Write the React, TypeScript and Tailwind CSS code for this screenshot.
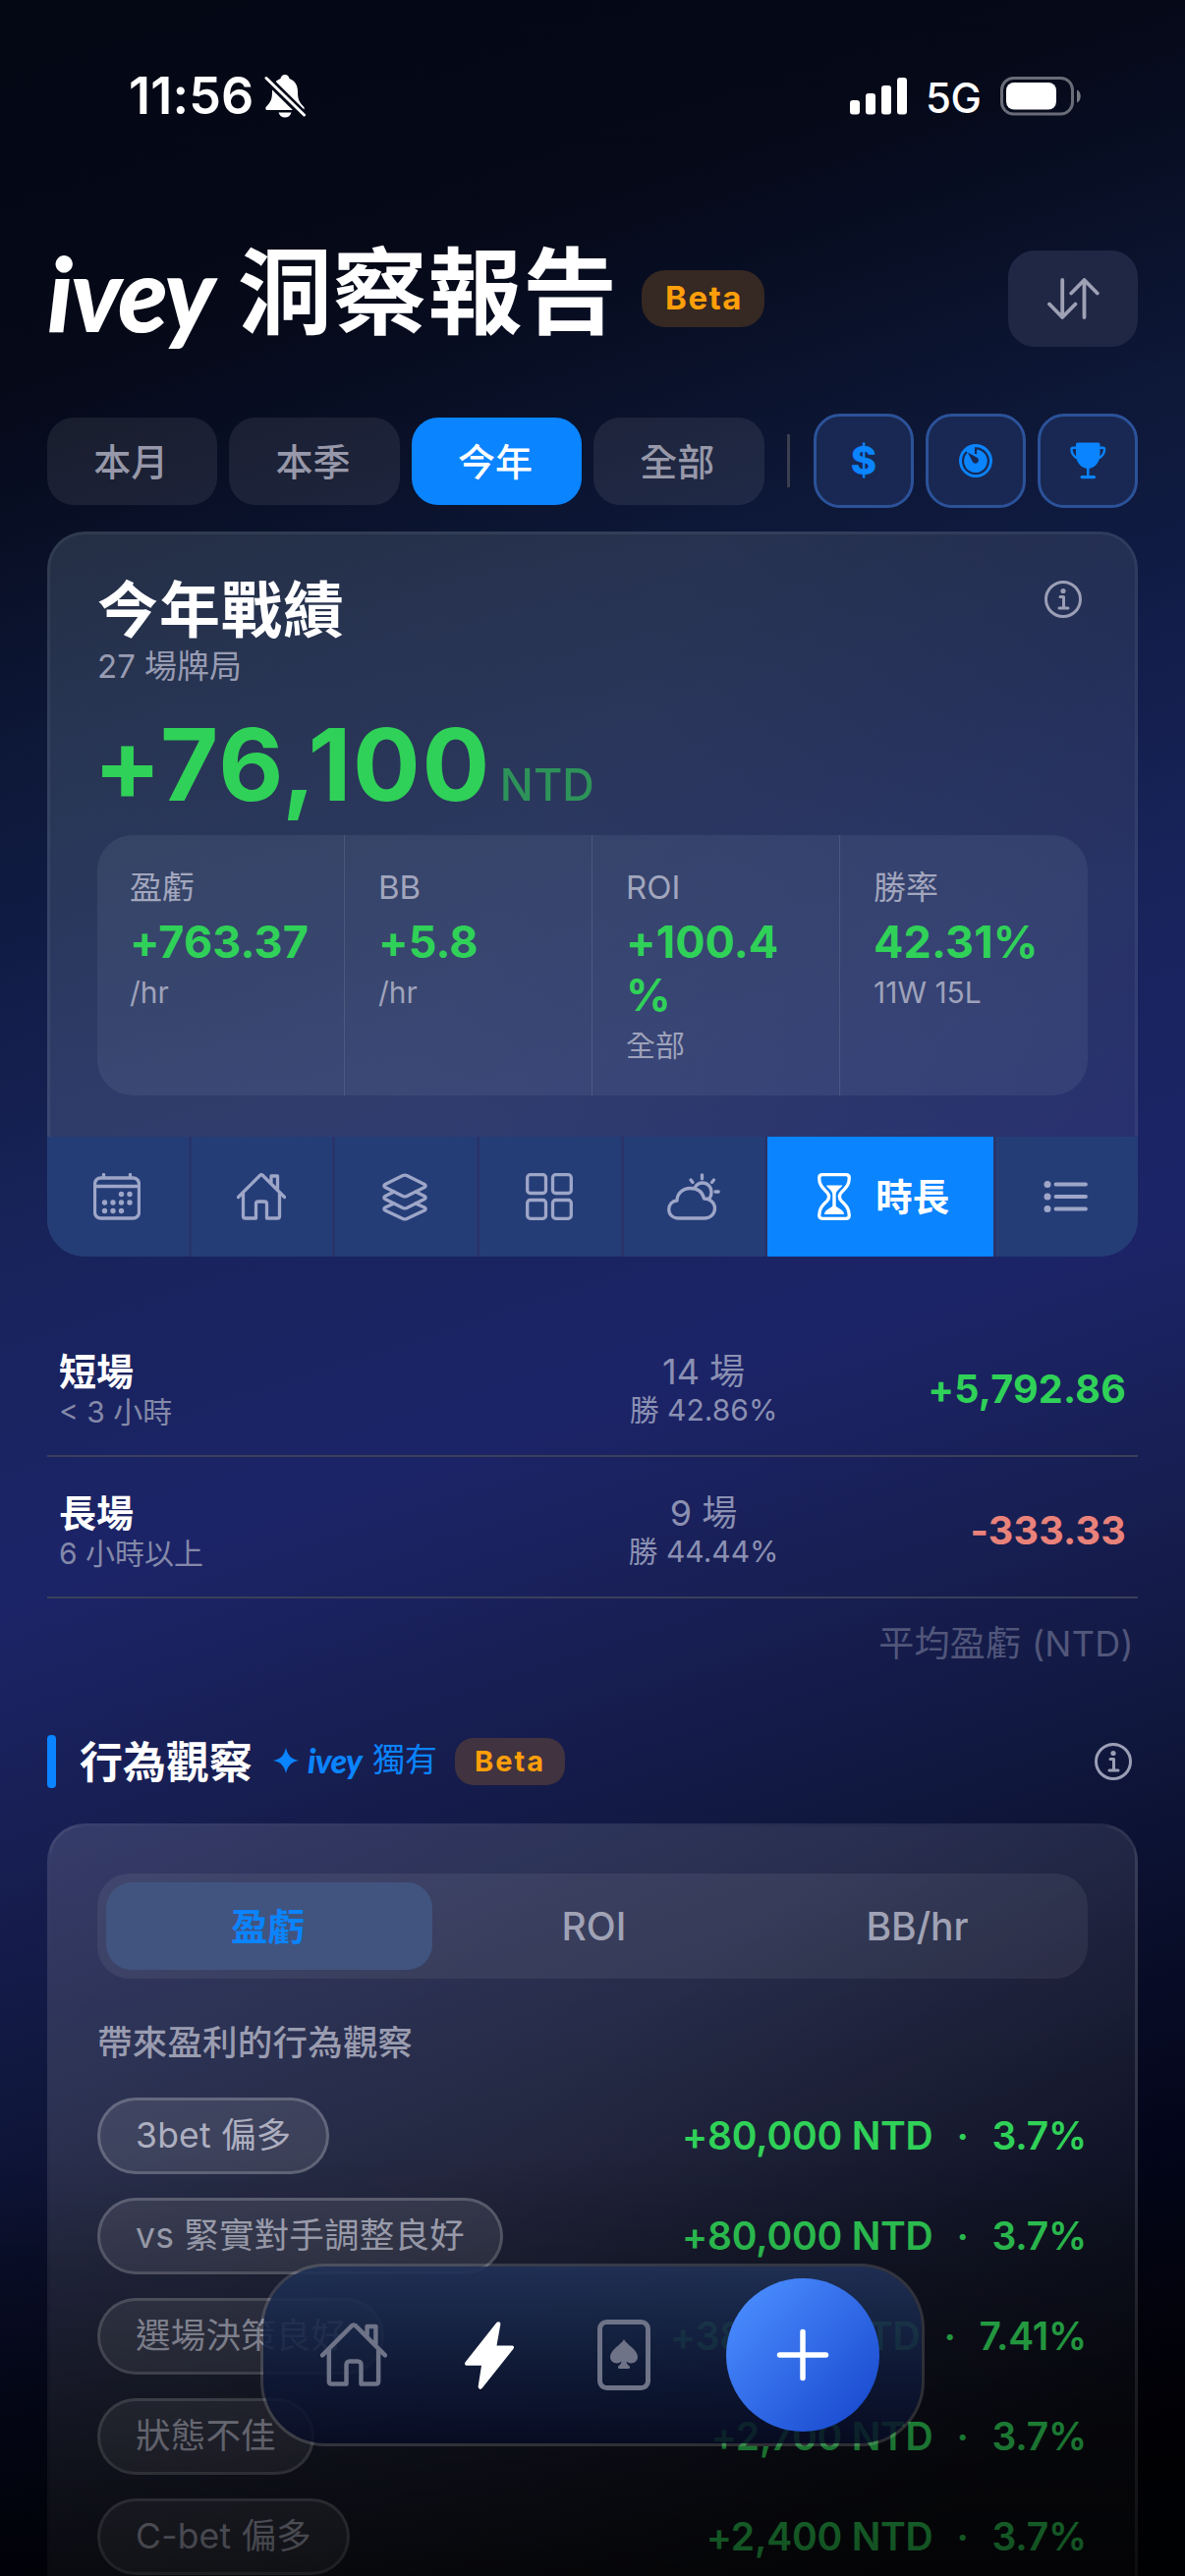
import React from 'react';

interface Stat {
  label: string;
  value: string;
  note: string;
}

interface Behavior {
  name: string;
  amount: string;
  rate: string;
}

const stats: Stat[] = [
  { label: '盈虧', value: '+763.37', note: '/hr' },
  { label: 'BB', value: '+5.8', note: '/hr' },
  { label: 'ROI', value: '+100.4\n%', note: '全部' },
  { label: '勝率', value: '42.31%', note: '11W 15L' },
];

const sessions = [
  { name: '短場', range: '< 3 小時', count: '14 場', win: '勝 42.86%', value: '+5,792.86', positive: true },
  { name: '長場', range: '6 小時以上', count: '9 場', win: '勝 44.44%', value: '-333.33', positive: false },
];

const behaviors: Behavior[] = [
  { name: '3bet 偏多', amount: '+80,000 NTD', rate: '3.7%' },
  { name: 'vs 緊實對手調整良好', amount: '+80,000 NTD', rate: '3.7%' },
  { name: '選場決策良好', amount: '+38,000 NTD', rate: '7.41%' },
  { name: '狀態不佳', amount: '+2,700 NTD', rate: '3.7%' },
  { name: 'C-bet 偏多', amount: '+2,400 NTD', rate: '3.7%' },
];

const line = {
  fill: 'none',
  stroke: 'currentColor',
  strokeWidth: 3.3,
  strokeLinecap: 'round' as const,
  strokeLinejoin: 'round' as const,
};

function BellOffIcon() {
  return (
    <svg width="42" height="44" viewBox="0 0 42 44">
      <mask id="bell-cut">
        <rect width="42" height="44" fill="#fff" />
        <path d="M1 2.5 40 41" stroke="#000" strokeWidth="8.5" />
      </mask>
      <g mask="url(#bell-cut)" fill="#fff">
        <path d="M21 0c-2.6 0-4.2 1.7-4.5 4C10.800 6 8 11 8 17c0 8-1.500 11-5.500 15C.5 34 1 36 3.500 36h35c2.500 0 3-2 1-4-4-4-5.500-7-5.500-15 0-6-2.800-11-8.500-13-.3-2.300-1.900-4-4.500-4z" />
        <path d="M14.500 38.500h13c-.8 3-3.200 5-6.500 5s-5.700-2-6.500-5z" />
      </g>
      <path d="M2 3.500 40.500 41" stroke="#fff" strokeWidth="3" strokeLinecap="round" />
    </svg>
  );
}

function SignalIcon() {
  return (
    <svg width="58" height="38" viewBox="0 0 58 38" fill="#fff">
      <rect x="0" y="23" width="10" height="14.500" rx="3" />
      <rect x="16" y="16" width="10" height="21.500" rx="3" />
      <rect x="32" y="8" width="10" height="29.500" rx="3" />
      <rect x="48" y="0" width="10" height="37.500" rx="3" />
    </svg>
  );
}

function BatteryIcon() {
  return (
    <svg width="83" height="40" viewBox="0 0 83 40">
      <rect x="1.500" y="1.500" width="72" height="36.500" rx="12" fill="none" stroke="#fff" strokeOpacity=".4" strokeWidth="3" />
      <rect x="6" y="6" width="51" height="27.500" rx="8" fill="#fff" />
      <path d="M78 13.500c5 2 5 11 0 13z" fill="#fff" fillOpacity=".45" />
    </svg>
  );
}

function SortIcon() {
  return (
    <svg width="53" height="42" viewBox="0 0 53 42" {...line} strokeWidth="3.800">
      <path d="M15.200 2v37.500M2 26.500l13.200 13.500 13.300-13.500M37.500 40V2M24.200 15.500 37.500 2l13.300 13.500" />
    </svg>
  );
}

function TimerIcon() {
  return (
    <svg width="34" height="34" viewBox="0 0 34 34">
      <circle cx="17" cy="17" r="17" fill="currentColor" />
      <path d="M17 10V4.300A12.900 12.900 0 1 1 7.900 8" fill="none" stroke="#182852" strokeWidth="2.200" />
      <path d="m8.800 8.500 10 5.500a3.300 3.300 0 1 1-4.700 4.600z" fill="#182852" />
    </svg>
  );
}

function TrophyIcon() {
  return (
    <svg width="37" height="38" viewBox="0 0 37 38">
      <path d="M6 2.500C6 1 7 .5 8.500.5h19.500c1.500 0 2.500.5 2.500 2V12c0 7.500-4 13-9.500 14.500-.9.200-1.500.6-1.500 1.500v6h5c2 0 2 3.200 0 3.200H12c-2 0-2-3.200 0-3.200h5v-6c0-.9-.6-1.300-1.500-1.500C10 25 6 19.500 6 12z" fill="currentColor" />
      <path d="M6.500 5.800H3c-1 0-1.600.5-1.600 1.500.2 4.300 2.300 7.400 6 9.200M30 5.800h3.500c1 0 1.600.5 1.600 1.500-.2 4.300-2.300 7.400-6 9.200" {...line} strokeWidth="2.400" />
    </svg>
  );
}

function InfoIcon() {
  return (
    <svg width="38" height="38" viewBox="0 0 38 38" className="text-[#9b9eb5]">
      <circle cx="19" cy="19" r="17.500" {...line} strokeWidth="3" />
      <circle cx="19" cy="10.500" r="2.600" fill="currentColor" />
      <path d="M16 16.500h3.500V28M15 28h9" {...line} strokeWidth="3" />
    </svg>
  );
}

function CalendarIcon() {
  const dots = [
    [28.5, 21.5], [37, 21.5],
    [11.5, 30], [20, 30], [28.5, 30], [37, 30],
    [11.5, 38.5], [20, 38.5], [28.5, 38.5],
  ];
  return (
    <svg width="48" height="48" viewBox="0 0 48 48">
      <path d="M7.500 5h33a6 6 0 0 1 6 6v29a6 6 0 0 1-6 6h-33a6 6 0 0 1-6-6V11a6 6 0 0 1 6-6zM2 13.500h44M10.500 1.500V4M37.500 1.500V4" {...line} />
      {dots.map(([x, y]) => (
        <circle key={`${x}-${y}`} cx={x} cy={y} r="2.700" fill="currentColor" />
      ))}
    </svg>
  );
}

function HomeIcon({ size = 50 }: { size?: number }) {
  return (
    <svg width={size} height={size * 0.96} viewBox="0 0 50 48" {...line}>
      <path d="M1.500 24.500 23.500 2.500c1-1 2-1 3 0l22 22M6.500 21v23c0 1.500.5 2 2 2h11V31.500c0-1.500 1-2.500 2.500-2.500h6c1.500 0 2.500 1 2.500 2.500V46h11c1.500 0 2-.5 2-2V21M35 9.500V3h6.500v13" />
    </svg>
  );
}

function LayersIcon() {
  return (
    <svg width="46" height="50" viewBox="0 0 46 50" {...line}>
      <path d="M21 3.500 3 12.500c-1.500.8-1.500 2.200 0 3l18 9c1.500.7 2.500.7 4 0l18-9c1.500-.8 1.500-2.200 0-3l-18-9c-1.500-.7-2.500-.7-4 0z" />
      <path d="M12 20 3 24.500c-1.500.8-1.500 2.200 0 3l18 9c1.500.7 2.500.7 4 0l18-9c1.500-.8 1.500-2.200 0-3L34 20" />
      <path d="m12 32-9 4c-1.500.8-1.500 2.200 0 3l18 8.500c1.500.7 2.500.7 4 0L43 39c1.500-.8 1.500-2.200 0-3l-9-4" />
    </svg>
  );
}

function GridIcon() {
  return (
    <svg width="48" height="48" viewBox="0 0 48 48" {...line}>
      <rect x="1.700" y="1.700" width="18.800" height="18.800" rx="3" />
      <rect x="27.500" y="1.700" width="18.800" height="18.800" rx="3" />
      <rect x="1.700" y="27.500" width="18.800" height="18.800" rx="3" />
      <rect x="27.500" y="27.500" width="18.800" height="18.800" rx="3" />
    </svg>
  );
}

function WeatherIcon() {
  return (
    <svg width="54" height="48" viewBox="0 0 54 48" {...line}>
      <path d="M11.500 46C5.500 46 1.700 42 1.700 37c0-5 3.300-8.500 8.300-9 0-7.500 6-12.500 13.500-12.500S36 19.500 37.500 26c6.500 0 11 4.500 11 10s-4.500 10-10.500 10z" />
      <path d="M28 15c2-3.500 4.500-5 8-5 5 0 9 4 9 9.500 0 3-1 5.500-3 7M35.500 1.800v4M24 7l2 2.500M47.500 7l-2 2.500M49 19h3.200" />
    </svg>
  );
}

function HourglassIcon() {
  return (
    <svg width="34" height="48" viewBox="0 0 34 48">
      <path d="M5 1.700h24c2.500 0 3.300 1.300 3.300 3.300 0 8-4.800 11-8.300 15-2 2.500-2 5.500 0 8 3.500 4 8.300 7 8.300 15 0 2-.8 3.300-3.300 3.300H5c-2.500 0-3.300-1.300-3.300-3.300 0-8 4.800-11 8.300-15 2-2.500 2-5.500 0-8C6.500 16 1.700 13 1.700 5c0-2 .8-3.300 3.300-3.300z" {...line} />
      <path d="M10 12.500h14.500c.7 0 .8.6.4 1C22 16.500 18.700 18.500 18.700 22v11c0 2.500 8.300 3.500 8.300 9H7c0-5.500 8.300-6.500 8.300-9V22c0-3.500-3.300-5.500-5.900-8.500-.3-.4-.1-1 .6-1z" fill="currentColor" />
    </svg>
  );
}

function ListIcon() {
  return (
    <svg width="46" height="32" viewBox="0 0 46 32" {...line}>
      <path d="M12.500 3.500H43M12.500 16H43M12.500 28.500H43" strokeWidth="3.800" />
      <g fill="currentColor" stroke="none">
        <circle cx="4" cy="3.500" r="3.500" />
        <circle cx="4" cy="16" r="3.500" />
        <circle cx="4" cy="28.500" r="3.500" />
      </g>
    </svg>
  );
}

function BoltIcon() {
  return (
    <svg width="52" height="70" viewBox="0 0 52 70" fill="#fff">
      <path d="M33 2.500 1.800 42c-1.500 2-.8 3.800 1.700 3.800H18l-3.300 21c-.4 2.800 2.300 4.200 4 2L50.300 29c1.500-2 .8-3.500-1.700-3.500H33.500L37.300 4C37.700 1 34.800.2 33 2.500z" />
    </svg>
  );
}

function SpadeCardIcon() {
  return (
    <svg width="54" height="72" viewBox="0 0 54 72">
      <rect x="2.500" y="2.500" width="49" height="67" rx="7" fill="none" stroke="currentColor" strokeWidth="5" />
      <path d="M27 20c2 5 14 10.500 14 18 0 6-7.500 8.500-11.500 4.500.3 2.300 1.200 3.300 3 4.700 1 .9.700 2.800-1 2.800h-9c-1.700 0-2-1.900-1-2.800 1.800-1.400 2.700-2.400 3-4.700C20.500 46.500 13 44 13 38c0-7.500 12-13 14-18z" fill="currentColor" />
    </svg>
  );
}

function PeriodTab({ label, active = false }: { label: string; active?: boolean }) {
  return (
    <button
      className={
        active
          ? 'w-[173.4px] h-[89px] pt-[3px] pr-[3px] rounded-[27px] bg-[#0a84ff] text-white text-[38px] font-medium'
          : 'w-[173.4px] h-[89px] pt-[3px] pr-[3px] rounded-[27px] bg-white/[0.08] text-[#9798a9] text-[38px] font-medium'
      }
    >
      {label}
    </button>
  );
}

function FilterButton({ children }: { children: React.ReactNode }) {
  return (
    <button className="w-[102px] h-[96px] rounded-[27px] border-[3px] border-[#2c5299] bg-[#182852] text-[#0a84ff] flex items-center justify-center">
      {children}
    </button>
  );
}

function ViewTab({ children }: { children: React.ReactNode }) {
  return (
    <button className="flex-1 pr-[2px] flex items-center justify-center bg-[#253d77] text-[#9ea6c8]">
      {children}
    </button>
  );
}

export default function App() {
  return (
    <div className="relative w-[1206px] h-[2622px] overflow-hidden text-white font-['Inter','Noto_Sans_CJK_TC',sans-serif] bg-[linear-gradient(162deg,#040714_0%,#050918_13%,#0d1736_25%,#101b43_31%,#18235a_42%,#1c2468_54%,#181f54_62%,#10173d_71%,#090e2a_78%,#03061a_85%,#010208_95%)]">
      {/* 狀態列 */}
      <div className="mt-[68px] h-[60px] pl-[131px] pr-[105px] flex items-center justify-between">
        <div className="flex items-center gap-[10px]">
          <span className="w-[128px] text-[52px] font-semibold tracking-[0.2px]">11:56</span>
          <BellOffIcon />
        </div>
        <div className="flex items-center">
          <SignalIcon />
          <span className="ml-[19px] w-[76px] mt-[2px] text-[42px] font-medium tracking-[-0.5px]">5G</span>
          <BatteryIcon />
        </div>
      </div>

      {/* 標題 */}
      <header className="mt-[127px] h-[98px] px-12 flex items-center justify-between">
        <div className="flex items-center">
          <h1 className="flex items-center leading-[96px] mb-[14px] text-[96px] font-bold">
            <span className="w-[194px] font-['Lato'] italic font-black text-[104px] tracking-[-2.2px] mt-[2px]">ivey</span>
            <span className="w-[384px] whitespace-nowrap tracking-[0.7px]">洞察報告</span>
          </h1>
          <span className="ml-[27px] h-[58px] w-[125px] pl-[2px] rounded-[24px] bg-[#362822] text-[#ff9f0a] text-[33px] font-bold tracking-[1.5px] flex items-center justify-center">
            Beta
          </span>
        </div>
        <button className="w-[132px] h-[98px] rounded-[27px] bg-[#202744] text-[#9ea0b4] flex items-center justify-center">
          <SortIcon />
        </button>
      </header>

      {/* 期間篩選 */}
      <div className="mt-[68px] h-[96px] px-12 flex items-center justify-between">
        <div className="flex gap-3">
          <PeriodTab label="本月" />
          <PeriodTab label="本季" />
          <PeriodTab label="今年" active />
          <PeriodTab label="全部" />
        </div>
        <div className="w-[3px] h-[54px] bg-[#3b3f50]" />
        <div className="flex gap-3">
          <FilterButton>
            <span className="text-[40px] font-extrabold">$</span>
          </FilterButton>
          <FilterButton>
            <TimerIcon />
          </FilterButton>
          <FilterButton>
            <TrophyIcon />
          </FilterButton>
        </div>
      </div>

      {/* 今年戰績 */}
      <section className="mx-12 mt-6 h-[738px] rounded-[38px] overflow-hidden flex flex-col bg-[linear-gradient(120deg,rgba(200,235,255,.14),rgba(225,245,255,.12)_45%,rgba(255,255,255,.055))]">
        <div className="h-[616px] px-12 pt-[48px] rounded-t-[38px] border-t-[3px] border-x-[3px] border-white/[0.06]">
          <div className="flex items-start justify-between">
            <div>
              <h2 className="text-[62px] leading-[60px] font-bold tracking-[1px]">今年戰績</h2>
              <p className="mt-[6px] text-[33px] leading-[40px] text-[#989cb3]">27 場牌局</p>
            </div>
            <div className="mr-[6px] -mt-[1px]">
              <InfoIcon />
            </div>
          </div>
          <div className="mt-[30px] h-[100px] leading-[100px] flex items-baseline text-[#30d158]">
            <span className="-ml-[4px] text-[102px] font-bold tracking-[1.6px]">+76,100</span>
            <span className="ml-[9px] text-[45px] font-medium opacity-60">NTD</span>
          </div>
          <div className="mt-[22px] h-[265px] rounded-[36px] bg-[#d2ebff]/[0.07] grid grid-cols-4 overflow-hidden">
            {stats.map((stat, index) => (
              <div
                key={stat.label}
                className={index > 0 ? 'pl-[34px] pt-[31px] -ml-px border-l border-white/10' : 'pl-[33px] pt-[31px]'}
              >
                <div className="text-[33px] leading-[44px] text-[#a2a6bd]">{stat.label}</div>
                <div className="mt-[7px] text-[45px] leading-[54px] font-bold tracking-[0.1px] text-[#30d158] whitespace-pre-line">
                  {stat.value}
                </div>
                <div className="mt-[3px] text-[30px] leading-[42px] text-[#9ea2ba]">{stat.note}</div>
              </div>
            ))}
          </div>
        </div>

        <div className="h-[122px] flex gap-[3px] bg-[#28346a]">
          <ViewTab><CalendarIcon /></ViewTab>
          <ViewTab><HomeIcon /></ViewTab>
          <ViewTab><LayersIcon /></ViewTab>
          <ViewTab><GridIcon /></ViewTab>
          <ViewTab><WeatherIcon /></ViewTab>
          <button className="w-[230px] pl-[6px] bg-[#0a84ff] flex items-center justify-center gap-[25px] text-[37.5px] font-bold">
            <HourglassIcon />
            <span className="mt-[3px]">時長</span>
          </button>
          <ViewTab><ListIcon /></ViewTab>
        </div>
      </section>

      {/* 時長列表 */}
      <section className="mx-12 mt-[60px]">
        {sessions.map(session => (
          <div key={session.name} className="h-[144px] pt-[35px] px-3 flex border-b-2 border-[#3a4059]">
            <div className="w-[556px]">
              <div className="text-[38px] leading-[44px] font-bold">{session.name}</div>
              <div className="text-[30px] leading-[38px] text-[#8489a8]">{session.range}</div>
            </div>
            <div className="w-[200px] text-center text-[#8b90b2]">
              <div className="text-[36px] leading-[44px]">{session.count}</div>
              <div className="text-[30px] leading-[34px]">{session.win}</div>
            </div>
            <div
              className={
                session.positive
                  ? 'flex-1 text-right text-[39.5px] leading-[80px] font-bold tracking-[0.2px] text-[#30d158]'
                  : 'flex-1 text-right text-[39.5px] leading-[80px] font-bold tracking-[0.2px] text-[#e9827a]'
              }
            >
              {session.value}
            </div>
          </div>
        ))}
        <p className="mt-[22px] pr-[4px] text-right text-[36px] leading-[48px] tracking-[0.3px] text-[#51567a]">平均盈虧 (NTD)</p>
      </section>

      {/* 行為觀察 */}
      <div className="mx-12 mt-[69px] h-[54px] flex items-center">
        <div className="w-[9px] h-[54px] rounded-[4px] bg-[#0a84ff]" />
        <h2 className="ml-[24px] text-[44px] font-bold pt-[1px]">行為觀察</h2>
        <div className="ml-[21px] mb-[3px] flex items-center text-[#0a84ff] text-[33px]">
          <svg width="26" height="26" viewBox="0 0 26 26" fill="currentColor">
            <path d="M13 0c1.500 6.500 4.500 11.500 13 13-8.500 1.500-11.500 6.500-13 13-1.500-6.500-4.500-11.500-13-13 8.500-1.500 11.500-6.500 13-13z" />
          </svg>
          <span className="ml-[9px] w-[66px] font-['Lato'] italic font-black text-[34px] tracking-[-0.7px]">ivey</span>
          <span className="w-[66px]">獨有</span>
        </div>
        <span className="ml-[18px] w-[112px] h-[48px] rounded-[19px] bg-[#41333f] text-[#ff9f0a] text-[29px] font-bold tracking-[2px] flex items-center justify-center">
          Beta
        </span>
        <div className="ml-auto mr-[6px]">
          <InfoIcon />
        </div>
      </div>

      <section className="mx-12 mt-9 h-[820px] px-12 pt-12 rounded-[38px] border-[3px] border-white/[0.06] bg-[linear-gradient(140deg,rgba(255,255,255,.13),rgba(255,255,255,.11)_40%,rgba(255,255,255,.04)_85%)]">
        <div className="h-[107px] p-[9px] rounded-[33px] bg-white/[0.065] flex text-[39px] font-medium text-[#a0a2b5]">
          <button className="flex-1 pt-[3px] pr-[3px] rounded-[26px] bg-[#41547f] text-[#0a84ff] font-bold text-[37.5px]">盈虧</button>
          <button className="flex-1 pt-[2px]">ROI</button>
          <button className="flex-1 pt-[2px]">BB/hr</button>
        </div>
        <p className="mt-[43px] text-[35.5px] leading-[46px] font-medium tracking-[0.2px] text-[#9a9cb0]">帶來盈利的行為觀察</p>
        <ul className="mt-[32px] flex flex-col gap-[24px]">
          {behaviors.map(item => (
            <li key={item.name} className="h-[78px] flex items-center justify-between">
              <span className="h-[78px] px-9 rounded-[39px] border-[3px] border-white/20 bg-white/10 text-[35.5px] tracking-[0.2px] text-[#adafc0] flex items-center">
                {item.name}
              </span>
              <span className="pr-[1px] pt-[1px] flex items-center text-[39px] font-semibold tracking-[-0.2px] text-[#30d158]">
                <span>{item.amount}</span>
                <span className="w-[60px] text-center">·</span>
                <span>{item.rate}</span>
              </span>
            </li>
          ))}
        </ul>
      </section>

      {/* 底部漸層 */}
      <div className="absolute inset-x-0 bottom-0 h-[430px] bg-gradient-to-b from-black/0 to-black/65" />

      {/* 導覽列 */}
      <nav className="absolute left-[265px] top-[2304px] w-[676px] h-[186px] rounded-[66px] border-[3px] border-white/15 bg-clip-padding bg-[linear-gradient(180deg,rgba(32,50,88,.9),rgba(15,26,56,.88)_60%,rgba(7,12,38,.8))] flex items-center text-[#6e7388]">
        <div className="ml-[58px]"><HomeIcon size={68} /></div>
        <div className="ml-[78px]"><BoltIcon /></div>
        <div className="ml-[84px]"><SpadeCardIcon /></div>
        <button className="ml-[77px] w-[156px] h-[156px] rounded-full bg-[linear-gradient(135deg,#4a8cff_10%,#1a4bcf_90%)] flex items-center justify-center">
          <svg width="56" height="56" viewBox="0 0 56 56" stroke="#fff" strokeWidth="5.500" strokeLinecap="round">
            <path d="M28 4.500v47M4.500 28h47" />
          </svg>
        </button>
      </nav>
    </div>
  );
}
